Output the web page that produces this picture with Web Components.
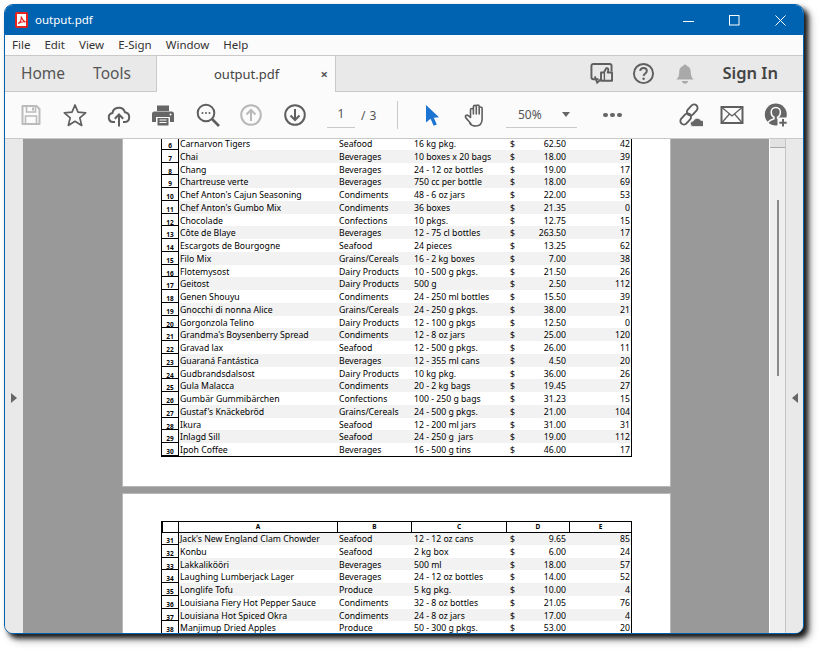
<!DOCTYPE html>
<html lang="en"><head><meta charset="utf-8"><title>output.pdf</title>
<style>
html,body{margin:0;padding:0;background:#fff;width:820px;height:650px;overflow:hidden}
body{font-family:"Noto Sans","Open Sans",sans-serif;padding:4px 0 0 4px;box-sizing:border-box}
</style></head>
<body>
<x-window>
  <x-titlebar title-text="output.pdf"></x-titlebar>
  <x-menubar></x-menubar>
  <x-tabbar></x-tabbar>
  <x-toolbar></x-toolbar>
  <x-viewer>
    <x-sheet id="p1" class="first"></x-sheet>
    <x-sheet id="p2" header></x-sheet>
  </x-viewer>
</x-window>
<script>
const S='#5f5f5f';
const ICONS={
 save:`<path d="M3.5 3h14l3 3v15h-17z" fill="none" stroke="#bbb" stroke-width="2" stroke-linejoin="round"/><path d="M7.5 3v6h9V3M6.5 21v-8h11v8" fill="none" stroke="#bbb" stroke-width="1.6"/><path d="M13 4.5h2v3h-2z" fill="#bbb"/>`,
 star:`<path d="M12 2l3 7.2 7.7.6-5.9 5 1.9 7.6L12 18.3l-6.7 4.1 1.9-7.6-5.9-5 7.7-.6z" fill="none" stroke="${S}" stroke-width="1.7" stroke-linejoin="round"/>`,
 cloud:`<path d="M8 19H6a4.5 4.5 0 0 1-.6-8.9A6.5 6.5 0 0 1 18 9.3a4.9 4.9 0 0 1 0 9.7h-2" fill="none" stroke="${S}" stroke-width="2"/><path d="M12 23.5V12M7.8 15.8L12 11.5l4.2 4.3" fill="none" stroke="${S}" stroke-width="2"/>`,
 print:`<path d="M6 2.5h12V8H6z" fill="#666"/><path d="M3.500 8.500h17A2.500 2.500 0 0 1 23 11v8h-4v-5H5v5H1v-8a2.500 2.500 0 0 1 2.500-2.500z" fill="#666"/><path d="M6.500 15h11v7.500h-11z" fill="#666"/><path d="M8.500 17h7M8.500 19.500h7" stroke="#fff" stroke-width="1"/><circle cx="19.500" cy="11.500" r="1" fill="#fff"/>`,
 zoom:`<circle cx="10" cy="10" r="8.300" fill="none" stroke="${S}" stroke-width="2"/><path d="M16 16l7 7" stroke="${S}" stroke-width="2.600"/><circle cx="6.500" cy="10" r="1" fill="${S}"/><circle cx="10" cy="10" r="1" fill="${S}"/><circle cx="13.500" cy="10" r="1" fill="${S}"/>`,
 up:`<circle cx="12" cy="12" r="9.800" fill="none" stroke="#b8b8b8" stroke-width="2"/><path d="M12 18V7M7.500 11.500L12 7l4.500 4.500" fill="none" stroke="#b8b8b8" stroke-width="2"/>`,
 down:`<circle cx="12" cy="12" r="9.800" fill="none" stroke="${S}" stroke-width="2"/><path d="M12 6v11M7.500 12.500L12 17l4.500-4.500" fill="none" stroke="${S}" stroke-width="2"/>`,
 arrow:`<path d="M6 2l13 12.200-5.200.6 3 6.600-3.200 1.400-3-7L6 19.500z" fill="#1b74d2"/>`,
 hand:`<path d="M6.800 20.500C5 18.300 2.800 16.300 1.700 14.500c-.9-1.600 1-3.100 2.500-1.900L6.500 14.500V6.800c0-1.800 2.900-1.800 2.900 0V11 3.700c0-1.800 2.900-1.800 2.900 0V11 3.300c0-1.800 2.900-1.800 2.900 0V11 5.300c0-1.800 2.900-1.800 2.900 0v10.500c0 4.700-2.700 7.200-6.300 7.200-2.500 0-4.500-.7-5.900-2.500z" fill="none" stroke="${S}" stroke-width="1.600" stroke-linejoin="round"/>`,
 link:`<g fill="none" stroke="${S}" stroke-width="1.900"><rect x="0.500" y="12.500" width="12.500" height="7" rx="3.500" transform="rotate(-48 6.700 16)"/><rect x="7" y="3.500" width="12.500" height="7" rx="3.500" transform="rotate(-48 13.200 7)"/></g><path d="M14 23.500a2.700 2.700 0 0 1 .2-5.400 4.200 4.200 0 0 1 7.700-.6 3.100 3.100 0 0 1 1.600 6z" fill="#666" stroke="#fbfbfb" stroke-width=".7"/>`,
 user:`<circle cx="11.800" cy="11.500" r="11" fill="#666"/><path d="M3.800 19.500c1.600-2.300 4-3.200 6.200-3.800v-1.500c-1.700-.9-2.800-2.700-2.800-5 0-2.800 1.900-4.800 4.600-4.800s4.600 2 4.600 4.800c0 2.300-1.100 4.100-2.800 5v1.500" fill="none" stroke="#fbfbfb" stroke-width="1.500"/><rect x="13.500" y="14.500" width="10.500" height="9.500" fill="#fbfbfb"/><path d="M19 16v7.500M15.300 19.800h7.400" stroke="#666" stroke-width="2"/>`,
 mail:`<rect x="1.500" y="4" width="21" height="16" fill="none" stroke="${S}" stroke-width="2"/><path d="M2 4.500l10 8.500 10-8.500M2 19.500l7.500-8.500M22 19.500L14.500 11" fill="none" stroke="${S}" stroke-width="1.300"/>`,
 like:`<path d="M9 18H3.500A2 2 0 0 1 1.500 16V4a2 2 0 0 1 2-2h17a2 2 0 0 1 2 2v6" fill="none" stroke="${S}" stroke-width="2"/><path d="M5 15l2.500 6.500 4-3.500" fill="none" stroke="${S}" stroke-width="2"/><path d="M11.500 11h3l2.500-4.500c1.500-.5 2.500.5 2 2.500l-.5 2H23v8.500H11.500z" fill="#e9e9e9" stroke="${S}" stroke-width="2" stroke-linejoin="round"/><path d="M15 11v8" stroke="${S}" stroke-width="1.500"/>`,
 help:`<circle cx="12" cy="12" r="10" fill="none" stroke="${S}" stroke-width="2"/><path d="M8.500 9.300c.3-2 1.700-3 3.500-3 2 0 3.500 1.200 3.500 3 0 2.500-3.300 2.700-3.400 5.200" fill="none" stroke="${S}" stroke-width="2"/><circle cx="12.100" cy="17.500" r="1.300" fill="${S}"/>`,
 bell:`<path d="M12 1.500c1.300 0 2 .8 2 1.800 3 .9 4.300 3.200 4.300 6.500 0 4 1 6.300 3.200 8.200H2.500c2.200-1.900 3.200-4.200 3.200-8.200 0-3.300 1.300-5.600 4.300-6.500 0-1 .7-1.800 2-1.800z" fill="#a9a9a9"/><path d="M8.500 19.500h7c-.5 2-2 3-3.500 3s-3-1-3.500-3z" fill="#a9a9a9"/>`
};
function define(name,css,html){
 customElements.define(name,class extends HTMLElement{
  constructor(){super();this.attachShadow({mode:'open'}).innerHTML=`<style>${css}</style>${html}`;}
 });
}
class XIcon extends HTMLElement{
 connectedCallback(){
  const s=this.getAttribute('size')||24;
  if(!this.shadowRoot){this.attachShadow({mode:'open'}).innerHTML=`<style>:host{display:block;width:${s}px;height:${s}px;flex:none}svg{display:block;width:100%;height:100%}</style><svg viewBox="0 0 24 24" aria-hidden="true">${ICONS[this.getAttribute('name')]}</svg>`;}
 }
}
customElements.define('x-icon',XIcon);

define('x-window',`:host{display:flex;flex-direction:column;width:800px;height:630px;box-sizing:border-box;border:1px solid #0063b1;border-radius:9px;overflow:hidden;background:#fff;box-shadow:4px 4px 5px rgba(0,0,0,.85),6px 6px 8px rgba(0,0,0,.35)}`,`<slot></slot>`);

class XTitle extends HTMLElement{
 constructor(){super();this.attachShadow({mode:'open'}).innerHTML=`<style>
 :host{display:flex;align-items:center;height:30px;flex:none;background:#0063b1;color:#fff;font:11.500px "Noto Sans",sans-serif;padding-left:10px;box-sizing:border-box}
 .t{margin-left:7px;flex:1;padding-bottom:1px}
 .c{display:flex}
 .b{width:46px;height:30px;display:flex;align-items:center;justify-content:center}
 svg{display:block}
 </style>
 <svg width="13" height="16" viewBox="0 0 13 16"><rect x="0" y="0" width="13" height="16" rx="2" fill="#e8221c"/><path d="M2 2h9v12H2z" fill="#fff"/><path d="M3 11.500c2-1 3.500-4 3.200-7 1 3 2.500 5 4.500 5.500-2.500-.5-5.500.2-7.700 1.500z" fill="none" stroke="#e8221c" stroke-width="1.100"/></svg>
 <span class="t"></span>
 <div class="c">
  <div class="b"><svg width="11" height="11"><path d="M0 6.500h11" stroke="#fff"/></svg></div>
  <div class="b"><svg width="11" height="11"><rect x=".5" y=".5" width="9.500" height="9.500" fill="none" stroke="#fff"/></svg></div>
  <div class="b"><svg width="11" height="11"><path d="M.5.500l10 10M10.500.500l-10 10" stroke="#fff"/></svg></div>
 </div>`;}
 connectedCallback(){this.shadowRoot.querySelector('.t').textContent=this.getAttribute('title-text')}
}
customElements.define('x-titlebar',XTitle);

define('x-menubar',`:host{display:flex;height:20px;flex:none;background:#fbfbfb;border-bottom:1px solid #c9c9c9;align-items:center;padding-left:7px;font:11.500px "Noto Sans",sans-serif;color:#333;gap:14px;box-sizing:content-box}
span{display:block;padding-bottom:2px}`,`<span>File</span><span>Edit</span><span>View</span><span>E-Sign</span><span>Window</span><span>Help</span>`);

define('x-tabbar',`:host{display:flex;height:35px;flex:none;background:#e9e9e9;border-bottom:1px solid #c9c9c9;font:15.500px "Noto Sans",sans-serif;color:#555}
.nav{width:151px;flex:none;display:flex;align-items:center;gap:28px;padding:0 0 2px 16px;box-sizing:border-box}
.tab{width:180px;flex:none;height:36px;background:#fbfbfb;border-left:1px solid #c9c9c9;border-right:1px solid #c9c9c9;box-sizing:border-box;display:flex;align-items:center;font-size:13px;color:#444;padding-left:57px;margin-bottom:-1px}
.tab b{margin-left:auto;margin-right:7px;color:#555;font-size:13px;font-weight:700}
.r{margin-left:auto;display:flex;align-items:center;margin-right:25px}
.signin{font-weight:600;font-size:16.500px;color:#444;margin-left:26px;padding-bottom:2px}
x-icon{margin-left:19px}
`,`<div class="nav"><span>Home</span><span>Tools</span></div>
<div class="tab"><span>output.pdf</span><b>×</b></div>
<div class="r"><x-icon name="like" size="23"></x-icon><x-icon name="help" size="23"></x-icon><x-icon name="bell" size="22"></x-icon><span class="signin">Sign In</span></div>`);

define('x-toolbar',`:host{display:flex;align-items:center;height:46px;flex:none;background:#fbfbfb;border-bottom:1px solid #c9c9c9;padding-left:14px;font:12px "Noto Sans",sans-serif;color:#555;box-sizing:content-box}
x-icon{margin-right:20px}
.pg{flex:none;width:28px;height:25px;border-bottom:1px solid #c9c9c9;text-align:center;line-height:22px;margin-right:6px;box-sizing:border-box}
.of{flex:none;width:36px;letter-spacing:.5px;white-space:pre}
.sep{flex:none;width:1px;height:28px;background:#c9c9c9;margin-right:22px}
.zoom{flex:none;width:71px;height:25px;border-bottom:1px solid #c9c9c9;box-sizing:border-box;display:flex;align-items:center;padding-left:12px;line-height:22px}
.zoom i{margin-left:auto;margin-right:7px;border:4.500px solid transparent;border-top:5px solid #666;border-bottom:0}
.dots{flex:none;display:flex;gap:2.500px;margin:0 23px 0 26px;width:18px}
.dots i{width:4.500px;height:4.500px;border-radius:50%;background:#666;flex:none}
`,`<x-icon name="save"></x-icon><x-icon name="star"></x-icon><x-icon name="cloud"></x-icon><x-icon name="print"></x-icon><x-icon name="zoom" style="margin-left:1px;margin-right:19px"></x-icon><x-icon name="up"></x-icon><x-icon name="down"></x-icon>
<span class="pg">1</span><span class="of">/ 3</span><span class="sep"></span>
<x-icon name="arrow" style="margin-right:20px"></x-icon><x-icon name="hand" style="margin-right:18px"></x-icon>
<div class="zoom"><span>50%</span><i></i></div><div class="dots"><i></i><i></i><i></i></div>
<x-icon name="link" style="margin-right:17px;margin-left:35px"></x-icon><x-icon name="mail" style="margin-right:20px"></x-icon><x-icon name="user"></x-icon>`);

define('x-viewer',`:host{display:flex;flex:1;min-height:0;background:#999}
.panel{width:18px;flex:none;background:#e9e9e9;display:flex;align-items:center;justify-content:center;padding-top:24px;box-sizing:border-box}
.panel.r{width:17px}
.tri{width:0;height:0;border-top:5.500px solid transparent;border-bottom:5.500px solid transparent}
.l .tri{border-left:6px solid #666}
.r .tri{border-right:6px solid #666}
.doc{flex:1;overflow:hidden;min-width:0;padding-left:99px;box-sizing:border-box;display:flex;flex-direction:column;gap:6px;align-items:flex-start}
.sb{width:17px;flex:none;background:#efefef;border-left:1px solid #fff;border-right:1px solid #c4c4c4;box-sizing:border-box;display:flex;flex-direction:column;align-items:center}
.th{width:100%;height:9px;background:#e2e2e2;border-bottom:1px solid #aaa;box-sizing:border-box;flex:none}
.bar{width:2px;height:176px;background:#8a8a8a;margin-top:52px;flex:none}
`,`<div class="panel l"><div class="tri"></div></div><div class="doc"><slot></slot></div><div class="sb"><div class="th"></div><div class="bar"></div></div><div class="panel r"><div class="tri"></div></div>`);

define('x-sheet',`:host{display:block;width:549px;background:#fff;box-sizing:border-box;border:1px solid #b8b8b8;flex:none;padding-left:38px}
:host(.first){border-top:0;height:350px;margin-top:-2px}
:host([header]){padding-top:27px;height:300px}
.t{width:471px;box-sizing:border-box;border:1px solid #000}
:host(.first) .t{border-top:0}
`,`<div class="t"><slot></slot></div>`);

const COLS='17px 159px 74px 95px 63px 1fr';
define('x-head',`:host{display:grid;grid-template-columns:16px 159px 74px 95px 63px 1fr;height:11px;margin-bottom:-1px;border-bottom:1px solid #000;font:700 6.500px "Noto Sans",sans-serif;color:#000;box-sizing:border-box;line-height:10px;text-align:center;position:relative;z-index:1}
span{border-left:1px solid #000;box-sizing:border-box}
span:first-child{border-left:0}`,`<span></span><span>A</span><span>B</span><span>C</span><span>D</span><span>E</span>`);

class XRow extends HTMLElement{
 constructor(){super();this.attachShadow({mode:'open'})}
 connectedCallback(){
  const [n,a,b,c,d,e]=JSON.parse(this.getAttribute('data'));
  const odd=n%2==1;
  this.shadowRoot.innerHTML=`<style>
  :host{display:grid;grid-template-columns:${COLS};height:12.750px;font:8.700px/15.500px "Noto Sans",sans-serif;color:#000;white-space:pre}
  div{overflow:hidden;height:12.750px;box-sizing:border-box}
  .n{border-right:1px solid #000;border-bottom:1px solid #000;background:#fff;font-weight:700;font-size:6.500px;line-height:17.500px;text-align:center}
  .s{background:${odd?'#f2f2f2':'#fff'}}
  .a{padding-left:1px}
  .b{padding-left:1px}.c{padding-left:2px}
  .d{display:flex;justify-content:space-between;padding:0 4px 0 3px}
  .e{text-align:right;padding-right:1px}
  </style><div class="n">${n}</div><div class="s a">${a}</div><div class="s b">${b}</div><div class="s c">${c}</div><div class="s d"><span>$</span><span>${d}</span></div><div class="s e">${e}</div>`;
 }
}
customElements.define('x-row',XRow);

const P1=[[6,"Carnarvon Tigers","Seafood","16 kg pkg.","62.50",42],[7,"Chai","Beverages","10 boxes x 20 bags","18.00",39],[8,"Chang","Beverages","24 - 12 oz bottles","19.00",17],[9,"Chartreuse verte","Beverages","750 cc per bottle","18.00",69],[10,"Chef Anton's Cajun Seasoning","Condiments","48 - 6 oz jars","22.00",53],[11,"Chef Anton's Gumbo Mix","Condiments","36 boxes","21.35",0],[12,"Chocolade","Confections","10 pkgs.","12.75",15],[13,"Côte de Blaye","Beverages","12 - 75 cl bottles","263.50",17],[14,"Escargots de Bourgogne","Seafood","24 pieces","13.25",62],[15,"Filo Mix","Grains/Cereals","16 - 2 kg boxes","7.00",38],[16,"Flotemysost","Dairy Products","10 - 500 g pkgs.","21.50",26],[17,"Geitost","Dairy Products","500 g","2.50",112],[18,"Genen Shouyu","Condiments","24 - 250 ml bottles","15.50",39],[19,"Gnocchi di nonna Alice","Grains/Cereals","24 - 250 g pkgs.","38.00",21],[20,"Gorgonzola Telino","Dairy Products","12 - 100 g pkgs","12.50",0],[21,"Grandma's Boysenberry Spread","Condiments","12 - 8 oz jars","25.00",120],[22,"Gravad lax","Seafood","12 - 500 g pkgs.","26.00",11],[23,"Guaraná Fantástica","Beverages","12 - 355 ml cans","4.50",20],[24,"Gudbrandsdalsost","Dairy Products","10 kg pkg.","36.00",26],[25,"Gula Malacca","Condiments","20 - 2 kg bags","19.45",27],[26,"Gumbär Gummibärchen","Confections","100 - 250 g bags","31.23",15],[27,"Gustaf's Knäckebröd","Grains/Cereals","24 - 500 g pkgs.","21.00",104],[28,"Ikura","Seafood","12 - 200 ml jars","31.00",31],[29,"Inlagd Sill","Seafood","24 - 250 g  jars","19.00",112],[30,"Ipoh Coffee","Beverages","16 - 500 g tins","46.00",17]];
const P2=[[31,"Jack's New England Clam Chowder","Seafood","12 - 12 oz cans","9.65",85],[32,"Konbu","Seafood","2 kg box","6.00",24],[33,"Lakkalikööri","Beverages","500 ml","18.00",57],[34,"Laughing Lumberjack Lager","Beverages","24 - 12 oz bottles","14.00",52],[35,"Longlife Tofu","Produce","5 kg pkg.","10.00",4],[36,"Louisiana Fiery Hot Pepper Sauce","Condiments","32 - 8 oz bottles","21.05",76],[37,"Louisiana Hot Spiced Okra","Condiments","24 - 8 oz jars","17.00",4],[38,"Manjimup Dried Apples","Produce","50 - 300 g pkgs.","53.00",20]];
function fill(el,rows,head){
 if(head)el.appendChild(document.createElement('x-head'));
 for(const r of rows){const x=document.createElement('x-row');x.setAttribute('data',JSON.stringify(r));el.appendChild(x)}
}
fill(document.getElementById('p1'),P1,false);
fill(document.getElementById('p2'),P2,true);
</script>
</body></html>
